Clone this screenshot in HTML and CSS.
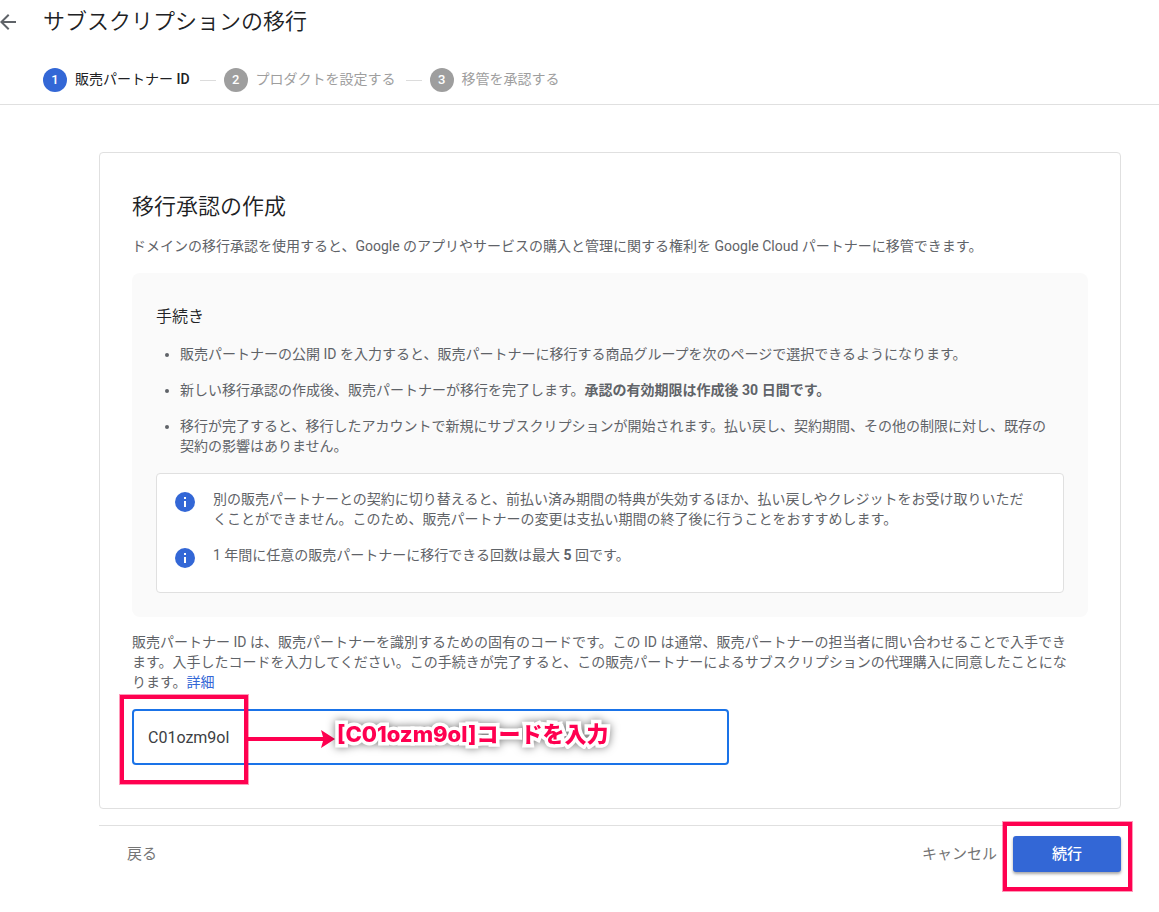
FILE: index.html
```html
<!DOCTYPE html>
<html lang="ja">
<head>
<meta charset="UTF-8">
<meta name="viewport" content="width=device-width, initial-scale=1.0">
<title>サブスクリプションの移行</title>
<link rel="stylesheet" href="styles.css">
</head>
<body>
<header class="header">
    <div class="title-row">
        <button type="button" class="back-arrow" aria-label="前のページ">
            <svg viewBox="4 4 16 16" width="16" height="16"><path d="M20 11H7.83l5.59-5.59L12 4l-8 8 8 8 1.41-1.41L7.83 13H20v-2z"/></svg>
        </button>
        <h1>サブスクリプションの移行</h1>
    </div>
    <ol class="steps">
        <li class="step active"><span class="num">1</span><span class="step-name">販売パートナー <b>ID</b></span></li>
        <li class="step"><span class="num">2</span><span class="step-name">プロダクトを設定する</span></li>
        <li class="step"><span class="num">3</span><span class="step-name">移管を承認する</span></li>
    </ol>
</header>
<main class="main">
    <form>
        <section class="card">
            <h2>移行承認の作成</h2>
            <p class="lead">ドメインの移行承認を使用すると、Google のアプリやサービスの購入と管理に関する権利を Google Cloud パートナーに移管できます。</p>
            <div class="guide">
                <h3>手続き</h3>
                <ul class="guide-list">
                    <li>販売パートナーの公開 ID を入力すると、販売パートナーに移行する商品グループを次のページで選択できるようになります。</li>
                    <li>新しい移行承認の作成後、販売パートナーが移行を完了します。<b>承認の有効期限は作成後 30 日間です。</b></li>
                    <li>移行が完了すると、移行したアカウントで新規にサブスクリプションが開始されます。払い戻し、契約期間、その他の制限に対し、既存の契約の影響はありません。</li>
                </ul>
                <div class="info">
                    <div class="info-row">
                        <svg class="info-icon" viewBox="0 0 20 20" width="20" height="20"><circle cx="10" cy="10" r="10"/><path d="M9 5h2v2H9zM9 9h2v6H9z"/></svg>
                        <p>別の販売パートナーとの契約に切り替えると、前払い済み期間の特典が失効するほか、払い戻しやクレジットをお受け取りいただくことができません。このため、販売パートナーの変更は支払い期間の終了後に行うことをおすすめします。</p>
                    </div>
                    <div class="info-row">
                        <svg class="info-icon" viewBox="0 0 20 20" width="20" height="20"><circle cx="10" cy="10" r="10"/><path d="M9 5h2v2H9zM9 9h2v6H9z"/></svg>
                        <p>1 年間に任意の販売パートナーに移行できる回数は最大 <b>5</b> 回です。</p>
                    </div>
                </div>
            </div>
            <p class="partner-text">販売パートナー ID は、販売パートナーを識別するための固有のコードです。この ID は通常、販売パートナーの担当者に問い合わせることで入手できます。入手したコードを入力してください。この手続きが完了すると、この販売パートナーによるサブスクリプションの代理購入に同意したことになります。<a href="#">詳細</a></p>
            <div class="field">
                <input type="text" id="partner" value="C01ozm9ol" aria-label="販売パートナー ID">
                <span class="mark mark-field"></span>
                <svg class="arrow" viewBox="0 0 90 18" width="90" height="18"><path d="M0 7h78L76 0l14 9-14 9 2-7H0z"/></svg>
                <span class="note">[C01ozm9ol]コードを入力</span>
            </div>
        </section>
        <div class="actions">
            <button type="button" class="btn">戻る</button>
            <button type="button" class="btn cancel">キャンセル</button>
            <div class="next">
                <button type="submit" class="btn primary">続行</button>
                <span class="mark mark-next"></span>
            </div>
        </div>
    </form>
</main>
</body>
</html>
```
FILE: styles.css
```css
* {
    box-sizing: border-box;
}
body {
    margin: 0;
    background: #fff;
    color: #5f6368;
    font: 400 14px/20px Roboto, "Noto Sans CJK JP", sans-serif;
}
h1,
h2,
h3,
p,
ul,
ol {
    margin: 0;
    padding: 0;
}
h1,
h2,
h3 {
    color: #202124;
    font-weight: 350;
}
button,
input {
    font-family: inherit;
}
a {
    color: #3367d6;
    text-decoration: none;
}
b {
    font-weight: 700;
}

/* header */
.header {
    padding-top: 8px;
    border-bottom: 1px solid #e0e0e0;
}
.title-row {
    display: flex;
    align-items: center;
    gap: 27px;
}
h1 {
    font-size: 22px;
    line-height: 28px;
}
.back-arrow {
    width: 16px;
    height: 16px;
    padding: 0;
    border: 0;
    background: none;
}
.back-arrow svg {
    display: block;
    fill: #5f6368;
}
.steps {
    display: flex;
    align-items: center;
    margin-top: 32px;
    padding: 0 0 12px 43px;
    list-style: none;
}
.step {
    display: flex;
    align-items: center;
    gap: 8px;
    color: #9e9e9e;
}
.step + .step::before {
    content: "";
    width: 16px;
    margin-left: 10px;
    border-top: 1px solid #dcdcdc;
}
.step-name {
    padding-bottom: 2px;
}
.num {
    width: 24px;
    height: 24px;
    border-radius: 50%;
    background: #9e9e9e;
    color: #fff;
    font-size: 13px;
    font-weight: 500;
    line-height: 24px;
    text-align: center;
}
.active {
    color: #202124;
}
.active b {
    font-weight: 500;
}
.active .num {
    background: #3367d6;
}

/* card */
.main {
    padding: 47px 38px 20px 99px;
}
.card {
    padding: 40px 32px 43px;
    border: 1px solid #e0e0e0;
    border-radius: 4px;
}
h2 {
    font-size: 22px;
    line-height: 28px;
}
.lead {
    margin: 15px 0 17px;
}
.guide {
    padding: 32px 24px 24px;
    border-radius: 8px;
    background: #fafafa;
}
h3 {
    margin-bottom: 15px;
    font-size: 16px;
    line-height: 24px;
}
.guide-list {
    padding: 0 8px 1px 24px;
}
.guide-list li {
    margin-bottom: 16px;
}
.info {
    padding: 15px 32px 8px 18px;
    border: 1px solid #e0e0e0;
    border-radius: 4px;
    background: #fff;
}
.info-row {
    display: flex;
    gap: 18px;
    margin-bottom: 16px;
}
.info-icon {
    flex: none;
    margin-top: 3px;
    fill: #3367d6;
}
.info-icon path {
    fill: #fff;
}
.partner-text {
    margin: 15px 0 17px;
    padding-right: 16px;
}

/* partner id */
.field {
    position: relative;
    max-width: 597px;
}
.field input {
    display: block;
    width: 100%;
    height: 56px;
    padding: 0 14px;
    border: 2px solid #1a73e8;
    border-radius: 4px;
    outline: 0;
    background: #fff;
    color: #3c4043;
    font-size: 16px;
}
.mark {
    position: absolute;
    border: 4px solid #ff0050;
    box-shadow: 0 0 0 1px rgba(255, 0, 80, .4);
    pointer-events: none;
}
.mark-field {
    left: -12px;
    top: -14px;
    width: 128px;
    height: 89px;
}
.arrow {
    position: absolute;
    left: 113px;
    top: 21px;
    fill: #ff0050;
}
.note {
    position: absolute;
    left: 205px;
    top: 9px;
    color: #ff0050;
    font: 800 22px/32px Inter, "Noto Sans CJK JP", sans-serif;
    white-space: nowrap;
    -webkit-text-stroke: 7px #fff;
    paint-order: stroke fill;
    stroke-linejoin: round;
    filter: drop-shadow(0 0 4px rgba(0, 0, 0, .5));
}

/* bottom buttons */
.actions {
    display: flex;
    align-items: center;
    margin-top: 16px;
    padding: 10px 0 0 28px;
    border-top: 1px solid #e0e0e0;
}
.btn {
    height: 36px;
    padding: 0 0 4px;
    border: 0;
    background: none;
    color: #757575;
    font-size: 15px;
}
.cancel {
    margin-left: auto;
}
.next {
    position: relative;
    margin-left: 16px;
}
.primary {
    display: block;
    width: 108px;
    border-radius: 3px;
    background: #3367d6;
    box-shadow: 0 2px 3px rgba(0, 0, 0, .35);
    color: #fff;
    font-weight: 500;
}
.mark-next {
    left: -10px;
    top: -14px;
    width: 129px;
    height: 69px;
}
```
